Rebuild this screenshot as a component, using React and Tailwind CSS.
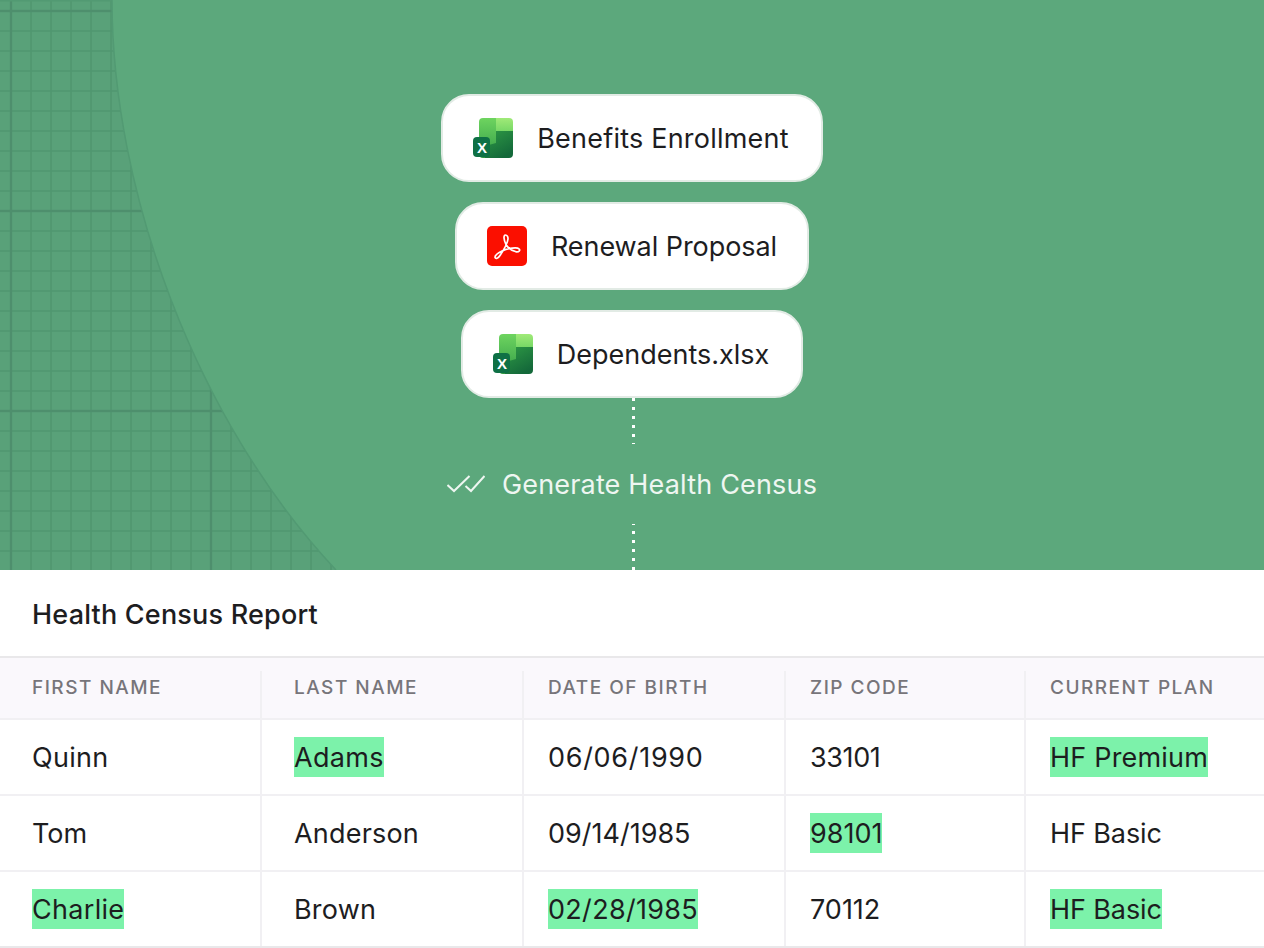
import React from "react";

const font = "font-['Inter','Liberation_Sans',sans-serif]";

const ExcelIcon = ({ id }) => (
  <svg width="40" height="40" viewBox="0 0 40 40" className="shrink-0">
    <defs>
      <linearGradient id={`${id}-a`} x1="0" y1="0" x2="0" y2="1">
        <stop offset="0" stopColor="#6ed45f" />
        <stop offset="0.55" stopColor="#4cb552" />
        <stop offset="1" stopColor="#2f9640" />
      </linearGradient>
      <linearGradient id={`${id}-b`} x1="0" y1="0" x2="0.6" y2="1">
        <stop offset="0" stopColor="#2f9a45" />
        <stop offset="1" stopColor="#14693a" />
      </linearGradient>
      <linearGradient id={`${id}-c`} x1="0" y1="0" x2="0" y2="1">
        <stop offset="0" stopColor="#a0ea78" />
        <stop offset="1" stopColor="#78d866" />
      </linearGradient>
    </defs>
    <path d="M6 4a4 4 0 0 1 4-4h13v40H10a4 4 0 0 1-4-4z" style={{ fill: `url(#${id}-a)` }} />
    <path d="M23 0h13a4 4 0 0 1 4 4v9H23z" style={{ fill: `url(#${id}-c)` }} />
    <path d="M23 13h17v23a4 4 0 0 1-4 4H12V28l11-3z" style={{ fill: `url(#${id}-b)` }} />
    <rect x="0" y="19" width="17" height="20" rx="4" fill="#0e7045" />
    <text x="9" y="34.5" textAnchor="middle" fontFamily="Liberation Sans, sans-serif" fontWeight="700" fontSize="15" fill="#ffffff">
      X
    </text>
  </svg>
);

const PdfIcon = () => (
  <svg width="40" height="40" viewBox="0 0 40 40" className="shrink-0">
    <rect width="40" height="40" rx="5" fill="#fb0f00" />
    <path
      d="M18.5 9C16.3 9 16.6 14 19 18.5C21 22 24.5 24.5 29 25.8C32.3 26.3 33.4 24 32 22.8C30 21 22 22 15 25C11 27 7.8 29 8 31.3C8.6 33.4 11.2 32.3 13 29.5C16 25 20.6 17 21 13C21.1 10.8 20 9 18.5 9Z"
      fill="none"
      stroke="#ffffff"
      strokeWidth="1.7"
      strokeLinejoin="round"
    />
  </svg>
);

const FileChip = ({ icon, label, className }) => (
  <div className={`h-[88px] flex items-center gap-6 pl-[30px] bg-white rounded-[28px] border-2 border-[#e2ebe5] ${className}`}>
    {icon}
    <span className="text-[27px] pt-[2px] text-[#1d1d1f]">{label}</span>
  </div>
);

const Dots = ({ className }) => (
  <div className={`h-[46px] flex gap-[6px] ml-[2px] overflow-hidden ${className}`}>
    {[0, 1, 2, 3, 4, 5].map((d) => (
      <span key={d} className="block w-[3px] h-[3px] bg-white shrink-0" />
    ))}
  </div>
);

const GridDecor = () => (
  <svg width="340" height="570" viewBox="0 0 340 570" className="absolute left-0 top-0">
    <defs>
      <pattern id="minor" x="10" y="10" width="20" height="20" patternUnits="userSpaceOnUse">
        <path d="M1 0V20M0 1H20" fill="none" stroke="#50966f" strokeWidth="1.6" />
      </pattern>
      <pattern id="major" x="9" y="9" width="200" height="200" patternUnits="userSpaceOnUse">
        <path d="M2 0V200M0 2H200" fill="none" stroke="#4e8f6d" strokeWidth="2.4" />
      </pattern>
      <clipPath id="curve">
        <path d="M0 0H112C112 190 195 420 336 570H0Z" />
      </clipPath>
    </defs>
    <g clipPath="url(#curve)">
      <rect width="340" height="570" fill="#59a179" />
      <rect width="340" height="570" fill="url(#minor)" />
      <rect width="340" height="570" fill="url(#major)" />
      <rect width="340" height="1.5" fill="#529a73" />
    </g>
    <path d="M112 0C112 190 195 420 336 570" fill="none" stroke="#529a73" strokeWidth="1.5" />
  </svg>
);

const rows = [
  [
    { t: "Quinn", c: "tracking-[0.3px]" },
    { t: "Adams", hit: true, c: "tracking-[0.3px]" },
    { t: "06/06/1990", c: "tracking-[0.7px]" },
    { t: "33101", c: "tracking-[-0.4px]" },
    { t: "HF Premium", hit: true, c: "tracking-[0.2px]" },
  ],
  [
    { t: "Tom" },
    { t: "Anderson", c: "tracking-[0.2px]" },
    { t: "09/14/1985" },
    { t: "98101", hit: true },
    { t: "HF Basic", c: "tracking-[-0.1px]" },
  ],
  [
    { t: "Charlie", hit: true, c: "tracking-[0.3px]" },
    { t: "Brown", c: "tracking-[0.2px]" },
    { t: "02/28/1985", hit: true, c: "tracking-[0.3px]" },
    { t: "70112" },
    { t: "HF Basic", hit: true, c: "tracking-[-0.1px]" },
  ],
];

const headers = ["FIRST NAME", "LAST NAME", "DATE OF BIRTH", "ZIP CODE", "CURRENT PLAN"];

const gridCols = "grid grid-cols-[260px_262px_262px_240px_240px]";

const App = () => {
  return (
    <div className={`w-[1264px] h-[948px] overflow-hidden bg-white ${font}`}>
      {/* hero */}
      <div className="relative h-[570px] bg-[#5ca87c] overflow-hidden">
        <GridDecor />
        <div className="relative flex flex-col items-center pt-[94px]">
          <div className="flex flex-col items-center gap-5">
            <FileChip icon={<ExcelIcon id="x1" />} label="Benefits Enrollment" className="pr-[32px] tracking-[0.22px]" />
            <FileChip icon={<PdfIcon />} label="Renewal Proposal" className="pr-[30px] tracking-[-0.06px]" />
            <FileChip icon={<ExcelIcon id="x2" />} label="Dependents.xlsx" className="pr-[32px]" />
          </div>
          <Dots className="flex-col" />
          <div className="h-[80px] flex items-center gap-[17px]">
            <svg width="38" height="18" viewBox="0 0 38 18" fill="none" stroke="#eef6f1" strokeWidth="2">
              <path d="M0.5 10L7 16L22.5 1" />
              <path d="M18.5 11L24 16L37.5 1" />
            </svg>
            <span className="text-[27px] pt-[2px] tracking-[0.18px] text-[#eef6f1]">Generate Health Census</span>
          </div>
          <Dots className="flex-col-reverse" />
        </div>
      </div>

      {/* report */}
      <div className="h-[86px] flex items-center px-8 pt-[4px] bg-white">
        <h1 className="text-[27px] font-[450] tracking-[0.2px] text-[#1d1d1f]">Health Census Report</h1>
      </div>
      <div className={`${gridCols} h-[64px] bg-[#faf8fc] border-y-2 border-[#e9e8ea] border-b-[#f1f0f3] items-end`}>
        {headers.map((h, i) => (
          <div
            key={h}
            className={`h-[47px] flex items-center pb-[12px] ${i > 0 ? "border-l-2 border-[#f1f0f3]" : ""} ${i > 1 ? "pl-6" : "pl-8"}`}
          >
            <span className="text-[19px] font-medium tracking-[1.5px] text-[#77757a]">{h}</span>
          </div>
        ))}
      </div>
      {rows.map((row, r) => (
        <div key={r} className={`${gridCols} h-[76px] border-b-2 ${r === 2 ? "border-[#e9e8ea]" : "border-[#f1f0f3]"}`}>
          {row.map((cell, i) => (
            <div key={i} className={`flex items-center ${i > 0 ? "border-l-2 border-[#f1f0f3]" : ""} ${i > 1 ? "pl-6" : "pl-8"}`}>
              <span className={`text-[27px] leading-[42px] h-10 text-[#1d1d1f] ${cell.hit ? "bg-[#7cf2aa]" : ""} ${cell.c || ""}`}>
                {cell.t}
              </span>
            </div>
          ))}
        </div>
      ))}
    </div>
  );
};

export default App;
